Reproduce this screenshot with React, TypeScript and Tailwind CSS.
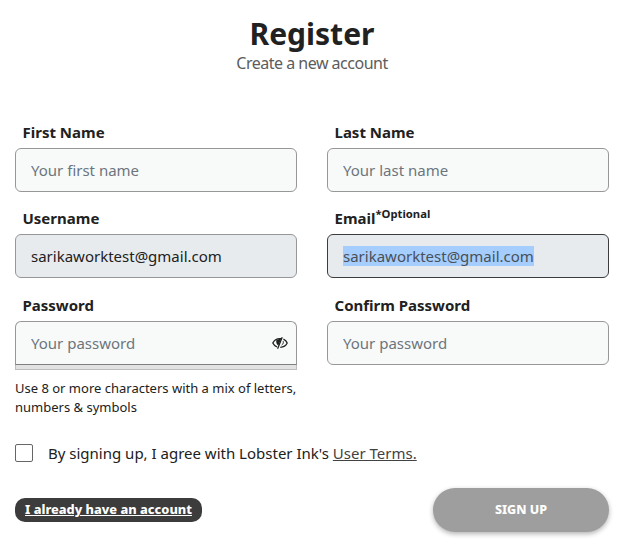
import React, { useState } from 'react';

const EyeHiddenIcon = () => (
  <svg width="16" height="12" viewBox="0 0 16 12" fill="none" stroke="currentColor" strokeWidth="1.3">
    <path d="M9 1.6C4.8 1.2 1.9 3.7.8 6c.6 1.3 2 2.9 4.1 3.8" />
    <path d="M11.4 2.2C13.3 3 14.6 4.4 15.2 6c-1 2.2-3.5 4.2-6.9 4.3" />
    <path d="M4.4 3 9.6 1 6.3 8.6C4.4 7.4 3.8 5 4.4 3z" fill="currentColor" stroke="none" />
    <path d="M10.2.3 5.6 11.7" />
    <path d="M11.2 4.2c.4 1.6-.1 2.9-1.5 3.8" strokeWidth="1" />
  </svg>
);

interface FieldProps {
  id: string;
  label: string;
  note?: string;
  children: React.ReactNode;
}

function Field({ id, label, note, children }: FieldProps) {
  return (
    <div>
      <label htmlFor={id} className="flex h-[21px] pl-[7.5px] text-[15px] leading-[21.5px] font-bold whitespace-nowrap">
        {label}
        {note && <span className="-mt-[5px] text-[11.25px]">{note}</span>}
      </label>
      <div className="mt-[5px]">{children}</div>
    </div>
  );
}

const inputClass =
  'block h-11 w-full rounded-[6px] border border-[#979797] bg-[#f8faf9] px-[15px] text-[15px] text-[#212121] outline-none placeholder:text-[#6c757d]';

export default function App() {
  const [accepted, setAccepted] = useState(false);

  return (
    <main className="h-[548px] w-[625px] overflow-hidden bg-white px-[15px] pt-[13px] font-['Noto_Sans',sans-serif] text-[#212121]">
      <header className="text-center">
        <h1 className="h-10 pr-px text-[30px] leading-[42px] font-bold">Register</h1>
        <p className="pr-px text-base leading-[20px] tracking-[-0.5px] text-[#5c5c5c]">Create a new account</p>
      </header>

      <form className="mt-[49px] w-[594px]" onSubmit={(e) => e.preventDefault()}>
        <div className="grid grid-cols-2 gap-x-[30px] gap-y-[16.48px]">
          <Field id="first-name" label="First Name">
            <input id="first-name" className={inputClass} placeholder="Your first name" />
          </Field>
          <Field id="last-name" label="Last Name">
            <input id="last-name" className={inputClass} placeholder="Your last name" />
          </Field>

          <Field id="username" label="Username">
            <div id="username" className="flex h-11 items-center rounded-[6px] border border-[#979797] bg-[#e8ebee] px-[15px] text-[15px]">
              sarikaworktest@gmail.com
            </div>
          </Field>
          <Field id="email" label="Email" note="*Optional">
            <div id="email" className="flex h-11 items-center rounded-[6px] border border-[#3c3c3c] bg-[#e8ebee] px-[15px] text-[15px] text-[#495057]">
              <span className="h-5 bg-[#a5cdfd] leading-5">sarikaworktest@gmail.com</span>
            </div>
          </Field>

          <Field id="password" label="Password">
            <div className="flex h-11 items-center rounded-t-[6px] border border-[#979797] border-b-[#808080] bg-[#f8faf9] pr-2 pl-[15px]">
              <input
                id="password"
                type="password"
                className="min-w-0 flex-1 bg-transparent text-[15px] outline-none placeholder:text-[#6c757d]"
                placeholder="Your password"
              />
              <EyeHiddenIcon />
            </div>
            {/* Password strength meter */}
            <div className="h-[5px] border border-t-0 border-[#bdbdbd] bg-[#e2e2e2]" />
            <p className="mt-[9px] text-[13px] leading-[19px] whitespace-nowrap">
              Use 8 or more characters with a mix of letters,
              <br />
              numbers &amp; symbols
            </p>
          </Field>
          <Field id="confirm-password" label="Confirm Password">
            <input id="confirm-password" type="password" className={inputClass} placeholder="Your password" />
          </Field>
        </div>

        <div className="mt-[26px] flex h-[21px] items-center">
          <input
            id="terms"
            type="checkbox"
            checked={accepted}
            onChange={(e) => setAccepted(e.target.checked)}
            className="size-[18px] appearance-none rounded-[2px] border border-[#666] bg-white checked:bg-[#3c3c3c]"
          />
          <label htmlFor="terms" className="ml-[15px] text-[15px] leading-[21px] whitespace-nowrap">
            By signing up, I agree with Lobster Ink's{' '}
            <a href="#terms" className="text-[#424242] underline">User Terms.</a>
          </label>
        </div>

        <div className="mt-6 flex items-center justify-between">
          <a href="#login" className="flex h-6 w-[187px] items-center justify-center rounded-[10px] bg-[#3c3c3c] text-[12.8px] font-extrabold whitespace-nowrap text-white underline">
            I already have an account
          </a>
          <button
            type="submit"
            className="h-11 w-44 rounded-full bg-[#9e9e9e] text-[12.5px] font-extrabold text-white shadow-[0_2px_5px_rgba(0,0,0,0.3)]"
          >
            SIGN UP
          </button>
        </div>
      </form>
    </main>
  );
}
